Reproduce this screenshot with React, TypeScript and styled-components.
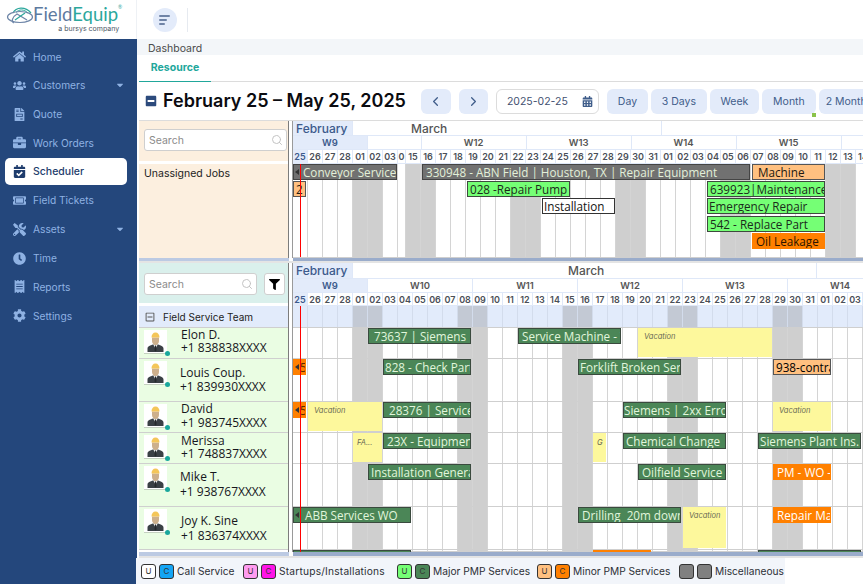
import type { FC, ReactNode } from "react"
import styled, { createGlobalStyle } from "styled-components"
import {
  FaBriefcase,
  FaCalendarAlt,
  FaCalendarCheck,
  FaCaretDown,
  FaClock,
  FaCog,
  FaFileInvoice,
  FaFilter,
  FaHome,
  FaMinusSquare,
  FaReceipt,
  FaRegMinusSquare,
  FaTicketAlt,
  FaTools,
  FaUsers,
} from "react-icons/fa"
import { FiChevronLeft, FiChevronRight, FiSearch } from "react-icons/fi"

const UI_FONT = `"Inter", "Roboto", "Liberation Sans", sans-serif`
const CARD_FONT = `"Open Sans", "Noto Sans", sans-serif`

const Global = createGlobalStyle`
  html, body {
    margin: 0;
    padding: 0;
    height: 100%;
    overflow: hidden;
    background: #fff;
    font-family: ${UI_FONT};
  }
  * { box-sizing: border-box; }
`

const Shell = styled.div`
  display: flex;
  width: 863px;
  height: 584px;
  overflow: hidden;
`

/* sidebar */
const Sidebar = styled.aside`
  flex: 0 0 137px;
  display: flex;
  flex-direction: column;
`
const LogoBox = styled.div`
  height: 39px;
  background: #fff;
  border-right: 1px solid #eef1f5;
  display: flex;
  align-items: flex-start;
  padding: 4px 0 0 6px;
`
const LogoText = styled.div`
  display: flex;
  flex-direction: column;
  align-items: flex-end;
  margin-left: -1px;
  line-height: 1;
`
const LogoName = styled.div`
  font-family: "Lato", sans-serif;
  font-size: 18.5px;
  color: #5d7a9f;
  margin-top: 1px;
  span { color: #2ba79c; }
  sup { font-size: 5px; color: #2ba79c; vertical-align: top; }
`
const LogoSub = styled.div`
  font-size: 7px;
  color: #4a5563;
  margin: 1px 3px 0 0;
`
const Nav = styled.nav`
  flex: 1;
  background: #24477c;
  padding: 4px 10px 0 5px;
  display: flex;
  flex-direction: column;
  gap: 1.8px;
`
const NavRow = styled.div<{ $active?: boolean }>`
  height: 27px;
  border-radius: 5px;
  display: flex;
  align-items: center;
  padding-left: 8px;
  font-size: ${(p) => (p.$active ? 10.5 : 10.2)}px;
  font-weight: ${(p) => (p.$active ? 500 : 400)};
  background: ${(p) => (p.$active ? "#fff" : "transparent")};
  color: ${(p) => (p.$active ? "#1e3c6c" : "#8fb2e3")};
  svg { flex: 0 0 13px; width: 13px; height: 13px; margin-right: 7px; }
`
const Caret = styled.span`
  margin-left: auto;
  display: flex;
  svg { flex: none; width: 10px; height: 10px; margin: 0 2px 0 0; }
`

/* top area */
const Main = styled.div`
  flex: 1;
  min-width: 0;
  display: flex;
  flex-direction: column;
`
const TopBar = styled.header`
  height: 39px;
  display: flex;
  align-items: center;
  padding-left: 16px;
  flex: none;
`
const MenuButton = styled.div`
  width: 24px;
  height: 24px;
  border-radius: 50%;
  background: #e3ebfa;
  display: flex;
  flex-direction: column;
  justify-content: center;
  gap: 2px;
  padding-left: 6px;
`
const MenuLine = styled.i<{ $w: number }>`
  display: block;
  height: 2px;
  border-radius: 1px;
  width: ${(p) => p.$w}px;
  background: #6f83a6;
`
const TopSep = styled.div`
  width: 1px;
  height: 24px;
  margin-left: 10px;
  background: #e6eaf0;
`
const Breadcrumb = styled.div`
  height: 16px;
  flex: none;
  background: #f3f6f9;
  font-size: 10.5px;
  line-height: 19px;
  color: #4a4a4a;
  padding-left: 11px;
`
const TabStrip = styled.div`
  height: 27px;
  flex: none;
  margin-left: 2px;
  border-bottom: 1px solid #dcdcdc;
  display: flex;
`
const Tab = styled.div`
  width: 72px;
  margin-bottom: -1px;
  border-bottom: 1px solid #21a79b;
  color: #21a79b;
  font-size: 10.5px;
  font-weight: 700;
  line-height: 25px;
  text-align: center;
`
const Toolbar = styled.div`
  height: 39px;
  flex: none;
  display: flex;
  align-items: center;
  padding: 0 0 0 6px;
  gap: 3px;
  position: relative;
  border-bottom: 1px solid #dcdcdc;
  margin-left: 2px;
`
const Collapse = styled.span`
  display: flex;
  color: #2c4a7c;
  margin-right: 3px;
  svg { width: 12px; height: 12px; }
`
const Title = styled.h1`
  margin: 0 12px 0 0;
  font-size: 18px;
  line-height: 1;
  font-weight: 600;
  color: #0b0b10;
  white-space: nowrap;
`
const SoftButton = styled.button<{ $w: number; $after?: number }>`
  flex: none;
  width: ${(p) => p.$w}px;
  height: 25px;
  margin-right: ${(p) => p.$after ?? 0}px;
  border: 0;
  border-radius: 6px;
  background: #e3ebfa;
  color: #3f5d8a;
  font: 400 10.5px ${UI_FONT};
  display: flex;
  align-items: center;
  justify-content: center;
  white-space: nowrap;
  padding: 0;
  svg { width: 15px; height: 15px; }
`
const DateBox = styled.div`
  flex: none;
  width: 103px;
  height: 25px;
  margin: 0 5px;
  border: 1px solid #dcdcdc;
  border-radius: 6px;
  display: flex;
  align-items: center;
  justify-content: space-between;
  padding: 0 5px 0 10px;
  color: #3f5070;
  font-size: 10.5px;
  svg { width: 11px; height: 11px; color: #3f5d8a; }
`
const Marker = styled.i`
  position: absolute;
  left: 673px;
  top: 31px;
  width: 4px;
  height: 4px;
  background: #8bc34a;
`

/* scheduler */
const Scheduler = styled.div`
  flex: 1;
  min-height: 0;
  display: flex;
  flex-direction: column;
  margin-left: 2px;
`
const Section = styled.section<{ $h: number }>`
  height: ${(p) => p.$h}px;
  flex: none;
  display: flex;
`
const LeftPanel = styled.div`
  flex: 0 0 150px;
  min-width: 0;
  display: flex;
  flex-direction: column;
  border-right: 1px solid #7c7c7c;
`
const SearchArea = styled.div<{ $bg: string; $top: number }>`
  height: 43px;
  flex: none;
  background: ${(p) => p.$bg};
  border-bottom: 3px solid #fff;
  display: flex;
  align-items: flex-start;
  padding: ${(p) => p.$top}px 0 0 5px;
  gap: 7px;
`
const SearchBox = styled.div<{ $w: number }>`
  width: ${(p) => p.$w}px;
  height: 22px;
  background: #fff;
  border: 1px solid #cfcfcf;
  border-radius: 3px;
  display: flex;
  align-items: center;
  justify-content: space-between;
  padding: 0 3px 0 4px;
  color: #8b8b8b;
  font-size: 10.5px;
  svg { width: 12px; height: 12px; color: #c4c4c4; }
`
const FilterButton = styled.div`
  width: 21px;
  height: 22px;
  background: #fff;
  border: 1px solid #cfcfcf;
  border-radius: 3px;
  display: flex;
  align-items: center;
  justify-content: center;
  svg { width: 11px; height: 11px; color: #000; }
`
const Unassigned = styled.div`
  flex: 1;
  background: #fcefdf;
  padding: 3px 5px;
  font-size: 10.5px;
  color: #222;
`
const TeamRow = styled.div`
  height: 22px;
  flex: none;
  background: #e2ebfb;
  border-bottom: 1px solid #cfcfcf;
  display: flex;
  align-items: center;
  padding-left: 6px;
  font-size: 10px;
  color: #222;
  svg { width: 10px; height: 10px; color: #555; margin-right: 8px; }
`
const ResourceRow = styled.div<{ $h: number }>`
  height: ${(p) => p.$h}px;
  flex: none;
  background: #eafde3;
  border-bottom: 1px solid #cfcfcf;
  display: flex;
  align-items: flex-start;
  padding-left: 5px;
  gap: 14px;
`
const AvatarWrap = styled.div`
  position: relative;
  flex: none;
  width: 23px;
  height: 24px;
  margin-top: 2px;
  background: #fff;
  border-bottom: 1px solid #c4d0c0;
`
const Dot = styled.i`
  position: absolute;
  right: -3px;
  bottom: -3px;
  width: 5px;
  height: 5px;
  border-radius: 50%;
  background: #19a79c;
`
const ResourceText = styled.div<{ $top: number; $gap: number; $shift?: number }>`
  display: flex;
  flex-direction: column;
  gap: ${(p) => p.$gap}px;
  margin-left: ${(p) => p.$shift ?? 0}px;
  padding-top: ${(p) => p.$top}px;
  font-family: ${CARD_FONT};
  font-size: 12px;
  line-height: 13px;
  color: #16161c;
  span { display: block; white-space: nowrap; }
`
const Gutter = styled.div`
  flex: 0 0 4px;
  background: #fff;
  border-right: 1px solid #9a9a9a;
`
const Timeline = styled.div`
  flex: 1;
  min-width: 0;
  overflow: hidden;
  display: flex;
  flex-direction: column;
  position: relative;
`
const HeadRow = styled.div<{ $h: number }>`
  height: ${(p) => p.$h}px;
  flex: none;
  display: flex;
  border-bottom: 1px solid #dfe8f8;
`
const MonthCell = styled.div<{ $w: number; $current?: boolean; $pad?: number }>`
  flex: 0 0 ${(p) => p.$w}px;
  font-size: 12px;
  font-weight: 500;
  line-height: 15px;
  padding-left: ${(p) => p.$pad ?? 3}px;
  white-space: nowrap;
  background: ${(p) => (p.$current ? "#e3ebfa" : "#fff")};
  color: ${(p) => (p.$current ? "#3c5a8c" : "#555")};
  border-right: 1px solid #dfe8f8;
`
const WeekCell = styled.div<{ $w: number; $current?: boolean }>`
  flex: 0 0 ${(p) => p.$w}px;
  font-size: 9.5px;
  font-weight: 600;
  line-height: 13px;
  text-align: center;
  background: ${(p) => (p.$current ? "#e3ebfa" : "#fff")};
  color: ${(p) => (p.$current ? "#3c5a8c" : "#555")};
  border-right: 1px solid #dfe8f8;
`
const DayCell = styled.div<{ $w: number; $current?: boolean }>`
  flex: 0 0 ${(p) => p.$w}px;
  overflow: hidden;
  font-size: 9px;
  font-weight: 600;
  line-height: 13px;
  text-align: center;
  background: ${(p) => (p.$current ? "#e3ebfa" : "#fff")};
  color: ${(p) => (p.$current ? "#3c5a8c" : "#4a4f58")};
  border-right: 1px solid #dfe8f8;
`
const GridRow = styled.div<{ $h: number; $team?: boolean }>`
  height: ${(p) => p.$h}px;
  flex: none;
  display: flex;
  position: relative;
  border-bottom: 1px solid #cfcfcf;
  background: ${(p) => (p.$team ? "#e2ebfb" : "#fff")};
`
const GridCell = styled.div<{ $w: number; $off: boolean; $team?: boolean }>`
  flex: 0 0 ${(p) => p.$w}px;
  border-right: 1px solid ${(p) => (p.$team ? "#d3dcec" : "#d4d4d4")};
  background: ${(p) => (p.$off ? (p.$team ? "#c3c9d4" : "#cfcfcf") : "transparent")};
`
const TodayLine = styled.i<{ $top: number }>`
  position: absolute;
  left: 7px;
  top: ${(p) => p.$top}px;
  bottom: 0;
  width: 1px;
  background: #f00;
  z-index: 3;
`

type Kind = "grey" | "major" | "majorDone" | "minor" | "minorDone" | "call"
const KIND: Record<Kind, { bg: string; fg: string; border: string }> = {
  grey: { bg: "#717171", fg: "#e3f0d9", border: "#444" },
  major: { bg: "#75ff75", fg: "#1b2b1b", border: "#3e4a3e" },
  majorDone: { bg: "#4b8657", fg: "#e1f6dc", border: "#3a4a3e" },
  minor: { bg: "#ffc080", fg: "#241a10", border: "#555" },
  minorDone: { bg: "#ff8000", fg: "#fff", border: "#ff8000" },
  call: { bg: "#fff", fg: "#111", border: "#333" },
}
const Card = styled.div<{ $x: number; $w: number; $y: number; $kind: Kind; $pad: number; $fg?: string; $edge?: boolean }>`
  position: absolute;
  left: ${(p) => p.$x - 293}px;
  top: ${(p) => p.$y}px;
  width: ${(p) => p.$w}px;
  height: 16px;
  z-index: 2;
  background: ${(p) => KIND[p.$kind].bg};
  color: ${(p) => p.$fg ?? KIND[p.$kind].fg};
  border: 1px solid ${(p) => KIND[p.$kind].border};
  font-family: ${CARD_FONT};
  font-size: 11.7px;
  line-height: 14px;
  white-space: pre;
  overflow: hidden;
  padding-left: ${(p) => p.$pad}px;
  ${(p) =>
    p.$edge
      ? `&::before {
    content: "";
    position: absolute;
    left: 1px;
    top: 4px;
    border: 3px solid transparent;
    border-right: 4px solid #333;
    border-left: 0;
  }`
      : ""}
`
const Vacation = styled.div<{ $x: number; $w: number; $h: number; $y: number; $small?: boolean }>`
  position: absolute;
  left: ${(p) => p.$x - 293}px;
  top: ${(p) => p.$y}px;
  width: ${(p) => p.$w}px;
  height: ${(p) => p.$h}px;
  z-index: 2;
  background: #fdf89c;
  color: #6b6b55;
  font-size: 7.5px;
  font-style: italic;
  line-height: 10px;
  padding: ${(p) => (p.$small ? "5px 0 0 4px" : "4px 0 0 6px")};
  overflow: hidden;
  white-space: nowrap;
`

const Splitter = styled.div<{ $h: number }>`
  height: ${(p) => p.$h}px;
  flex: none;
  display: flex;
  border-bottom: 2px solid #e4e4e4;
`
const SplitLeft = styled.div`
  flex: 0 0 150px;
  background: #bccae3;
`
const SplitRight = styled.div`
  flex: 1;
  margin-left: 4px;
  background: #9aaccb;
`
const Legend = styled.footer`
  flex: none;
  height: 26px;
  width: 649px;
  margin-left: -3px;
  background: #f2f5fa;
  display: flex;
  align-items: center;
  padding-left: 5px;
`
const LegendGroup = styled.div<{ $w: number; $track?: number }>`
  flex: 0 0 ${(p) => p.$w}px;
  display: flex;
  align-items: center;
  font-size: 10.2px;
  letter-spacing: ${(p) => p.$track ?? 0}px;
  color: #2c2f36;
  white-space: nowrap;
`
const Chip = styled.span<{ $bg: string }>`
  width: 15px;
  height: 15px;
  margin-right: 3px;
  border: 1px solid #333;
  border-radius: 3px;
  background: ${(p) => p.$bg};
  font-size: 8px;
  letter-spacing: 0;
  line-height: 13px;
  text-align: center;
  color: #333;
`

const Logo: FC = () => (
  <svg width="28" height="24" viewBox="0 0 28 24" fill="none">
    <path d="M7 9C10 3 19 2 25 9" stroke="#2ba79c" strokeWidth="1.3" />
    <path d="M10 8.500C13 5 18 5 22 9" stroke="#2ba79c" strokeWidth="1" />
    <ellipse cx="14" cy="13" rx="12.500" ry="5.500" stroke="#6e86a8" strokeWidth="1.2" />
    <path d="M8 19C5 18 6 13 11 10L21 16" stroke="#6e86a8" strokeWidth="1.2" />
    <path d="M9 16L19 9" stroke="#2ba79c" strokeWidth="1.2" />
  </svg>
)

const Avatar: FC = () => (
  <AvatarWrap>
    <svg width="23" height="23" viewBox="0 0 23 23">
      <path d="M3.500 22V18.500C3.500 16 6.500 15.500 9 14.500H14C16.500 15.500 19.500 16 19.500 18.500V22Z" fill="#3a4045" />
      <path d="M9.300 14.500L11.500 18.500L13.700 14.500Z" fill="#f1f1f1" />
      <path d="M11 15.500H12L12.500 20.500L11.500 21.500L10.500 20.500Z" fill="#26292c" />
      <path d="M8 7.500H15V11C15 13 13.500 15 11.500 15C9.500 15 8 13 8 11Z" fill="#cdb08c" />
      <path d="M7.500 7.500C7.500 4.500 9 2.500 11.500 2.500C14 2.500 15.500 4.500 15.500 7.500Z" fill="#f4c659" />
    </svg>
    <Dot />
  </AvatarWrap>
)

const SearchField: FC<{ width: number }> = ({ width }) => (
  <SearchBox $w={width}>
    Search
    <FiSearch />
  </SearchBox>
)

const Resource: FC<{ name: string; phone: string; height: number; top: number; gap: number; shift?: number }> = ({
  name,
  phone,
  height,
  top,
  gap,
  shift,
}) => (
  <ResourceRow $h={height}>
    <Avatar />
    <ResourceText $top={top} $gap={gap} $shift={shift}>
      <span>{name}</span>
      <span>{phone}</span>
    </ResourceText>
  </ResourceRow>
)

const pad = (n: number) => String(n).padStart(2, "0")
const dayLabel = (i: number) => pad(i < 4 ? 25 + i : i < 35 ? i - 3 : i - 34)
const isOff = (i: number) => i % 7 === 4 || i % 7 === 5

type Col = { label: string; w: number; off: boolean }
const range = (from: number, to: number): Col[] => {
  const out: Col[] = []
  for (let i = from; i < to; i++) out.push({ label: dayLabel(i), w: 15, off: isOff(i) })
  return out
}
const upperCols: Col[] = [...range(0, 7), { label: "0", w: 8, off: false }, ...range(18, 50)]
const lowerCols: Col[] = range(0, 40)

const DayHeader: FC<{ cols: Col[]; h: number }> = ({ cols, h }) => (
  <HeadRow $h={h}>
    {cols.map((c, i) => (
      <DayCell key={i} $w={c.w} $current={i === 0}>
        {c.label}
      </DayCell>
    ))}
  </HeadRow>
)

const Cells: FC<{ cols: Col[]; team?: boolean }> = ({ cols, team }) => (
  <>
    {cols.map((c, i) => (
      <GridCell key={i} $w={c.w} $off={c.off} $team={team} />
    ))}
  </>
)

const Row: FC<{ h: number; children?: ReactNode }> = ({ h, children }) => (
  <GridRow $h={h}>
    <Cells cols={lowerCols} />
    {children}
  </GridRow>
)

const nav = [
  { label: "Home", icon: <FaHome /> },
  { label: "Customers", icon: <FaUsers />, caret: true },
  { label: "Quote", icon: <FaFileInvoice /> },
  { label: "Work Orders", icon: <FaBriefcase /> },
  { label: "Scheduler", icon: <FaCalendarCheck />, active: true },
  { label: "Field Tickets", icon: <FaTicketAlt /> },
  { label: "Assets", icon: <FaTools />, caret: true },
  { label: "Time", icon: <FaClock /> },
  { label: "Reports", icon: <FaReceipt /> },
  { label: "Settings", icon: <FaCog /> },
]

const legend = [
  { label: "Call Service", u: "#fff", c: "#14a5f5", w: 102 },
  { label: "Startups/Installations", u: "#ff9bf0", c: "#ff14e8", w: 154, track: 0.2 },
  { label: "Major PMP Services", u: "#75ff75", c: "#4b8657", w: 140 },
  { label: "Minor PMP Services", u: "#ffc080", c: "#ff8000", w: 142 },
  { label: "Miscellaneous", u: "#808080", c: "#808080", w: 104, blank: true },
]

export default function App() {
  return (
    <Shell>
      <Global />
      <Sidebar>
        <LogoBox>
          <Logo />
          <LogoText>
            <LogoName>
              Field<span>Equip</span>
              <sup>®</sup>
            </LogoName>
            <LogoSub>a bursys company</LogoSub>
          </LogoText>
        </LogoBox>
        <Nav>
          {nav.map((n) => (
            <NavRow key={n.label} $active={n.active}>
              {n.icon}
              {n.label}
              {n.caret && (
                <Caret>
                  <FaCaretDown />
                </Caret>
              )}
            </NavRow>
          ))}
        </Nav>
      </Sidebar>
      <Main>
        <TopBar>
          <MenuButton>
            <MenuLine $w={11} />
            <MenuLine $w={8} />
            <MenuLine $w={6} />
          </MenuButton>
          <TopSep />
        </TopBar>
        <Breadcrumb>Dashboard</Breadcrumb>
        <TabStrip>
          <Tab>Resource</Tab>
        </TabStrip>
        <Toolbar>
          <Collapse>
            <FaMinusSquare />
          </Collapse>
          <Title>February 25 – May 25, 2025</Title>
          <SoftButton $w={30} $after={5}>
            <FiChevronLeft />
          </SoftButton>
          <SoftButton $w={29}>
            <FiChevronRight />
          </SoftButton>
          <DateBox>
            2025-02-25
            <FaCalendarAlt />
          </DateBox>
          <SoftButton $w={41}>Day</SoftButton>
          <SoftButton $w={56}>3 Days</SoftButton>
          <SoftButton $w={49}>Week</SoftButton>
          <SoftButton $w={54}>Month</SoftButton>
          <SoftButton $w={60}>2 Months</SoftButton>
          <Marker />
        </Toolbar>
        <Scheduler>
          <Section $h={137}>
            <LeftPanel>
              <SearchArea $bg="#fcefdf" $top={8}>
                <SearchField width={143} />
              </SearchArea>
              <Unassigned>Unassigned Jobs</Unassigned>
            </LeftPanel>
            <Gutter />
            <Timeline>
              <HeadRow $h={15}>
                <MonthCell $w={60} $current>
                  February
                </MonthCell>
                <MonthCell $w={309} $pad={58}>
                  March
                </MonthCell>
              </HeadRow>
              <HeadRow $h={14}>
                <WeekCell $w={75} $current>
                  W9
                </WeekCell>
                <WeekCell $w={53.6} />
                <WeekCell $w={105}>W12</WeekCell>
                <WeekCell $w={105}>W13</WeekCell>
                <WeekCell $w={105}>W14</WeekCell>
                <WeekCell $w={105}>W15</WeekCell>
                <WeekCell $w={105} />
              </HeadRow>
              <DayHeader cols={upperCols} h={14} />
              <GridRow $h={94}>
                <Cells cols={upperCols} />
                <TodayLine $top={0} />
                <Card $x={293} $w={104} $y={0} $kind="grey" $pad={9} $edge>
                  Conveyor Service
                </Card>
                <Card $x={422} $w={328} $y={0} $kind="grey" $pad={3}>
                  330948 - ABN Field | Houston, TX | Repair Equipment
                </Card>
                <Card $x={752} $w={73} $y={0} $kind="minor" $pad={5}>
                  Machine
                </Card>
                <Card $x={293} $w={13} $y={17} $kind="minor" $pad={2}>
                  2
                </Card>
                <Card $x={467} $w={103} $y={17} $kind="major" $pad={2}>
                  028 -Repair Pump
                </Card>
                <Card $x={542} $w={73} $y={34} $kind="call" $pad={1}>
                  Installation
                </Card>
                <Card $x={707} $w={118} $y={17} $kind="major" $pad={2}>
                  639923|Maintenance
                </Card>
                <Card $x={707} $w={118} $y={34} $kind="major" $pad={1}>
                  Emergency Repair
                </Card>
                <Card $x={707} $w={118} $y={52} $kind="major" $pad={2}>
                  542 - Replace Part
                </Card>
                <Card $x={752} $w={73} $y={69} $kind="minorDone" $pad={3} $fg="#2b1500">
                  Oil Leakage
                </Card>
              </GridRow>
            </Timeline>
          </Section>
          <Splitter $h={5}>
            <SplitLeft />
            <SplitRight />
          </Splitter>
          <Section $h={289}>
            <LeftPanel>
              <SearchArea $bg="#daf0ec" $top={10}>
                <SearchField width={113} />
                <FilterButton>
                  <FaFilter />
                </FilterButton>
              </SearchArea>
              <TeamRow>
                <FaRegMinusSquare />
                Field Service Team
              </TeamRow>
              <Resource name="Elon D." phone="+1 838838XXXX" height={31} top={0} gap={0} />
              <Resource name="Louis Coup." phone="+1 839930XXXX" height={43} top={7} gap={1} shift={-1} />
              <Resource name="David" phone="+1 983745XXXX" height={31} top={0} gap={1} />
              <Resource name="Merissa" phone="+1 748837XXXX" height={31} top={1} gap={0} />
              <Resource name="Mike T." phone="+1 938767XXXX" height={43} top={6} gap={2} shift={-1} />
              <Resource name="Joy K. Sine" phone="+1 836374XXXX" height={43} top={7} gap={2} />
            </LeftPanel>
            <Gutter />
            <Timeline>
              <HeadRow $h={16}>
                <MonthCell $w={60} $current>
                  February
                </MonthCell>
                <MonthCell $w={464} $pad={215}>
                  March
                </MonthCell>
              </HeadRow>
              <HeadRow $h={14}>
                <WeekCell $w={75} $current>
                  W9
                </WeekCell>
                <WeekCell $w={105}>W10</WeekCell>
                <WeekCell $w={105}>W11</WeekCell>
                <WeekCell $w={105}>W12</WeekCell>
                <WeekCell $w={105}>W13</WeekCell>
                <WeekCell $w={105}>W14</WeekCell>
              </HeadRow>
              <DayHeader cols={lowerCols} h={13} />
              <GridRow $h={22} $team>
                <Cells cols={lowerCols} team />
              </GridRow>
              <TodayLine $top={43} />
              <Row h={31}>
                <Card $x={368} $w={103} $y={0} $kind="majorDone" $pad={5}>
                  73637 | Siemens
                </Card>
                <Card $x={518} $w={103} $y={0} $kind="majorDone" $pad={3}>
                  Service Machine - WO
                </Card>
                <Vacation $x={638} $w={134} $h={29} $y={0}>
                  Vacation
                </Vacation>
              </Row>
              <Row h={43}>
                <Card $x={293} $w={13} $y={0} $kind="minorDone" $pad={6} $fg="#5a2c00" $edge>
                  5
                </Card>
                <Card $x={383} $w={88} $y={0} $kind="majorDone" $pad={1}>
                  828 - Check Part
                </Card>
                <Card $x={578} $w={103} $y={0} $kind="majorDone" $pad={1}>
                  Forklift Broken Service
                </Card>
                <Card $x={773} $w={58} $y={0} $kind="minor" $pad={2} $fg="#000">
                  938-contract
                </Card>
              </Row>
              <Row h={31}>
                <Card $x={293} $w={13} $y={0} $kind="minorDone" $pad={6} $fg="#5a2c00" $edge>
                  5
                </Card>
                <Vacation $x={308} $w={74} $h={29} $y={0}>
                  Vacation
                </Vacation>
                <Card $x={383} $w={88} $y={0} $kind="majorDone" $pad={5}>
                  28376 | Service
                </Card>
                <Card $x={623} $w={103} $y={0} $kind="majorDone" $pad={0}>
                  Siemens | 2xx Error
                </Card>
                <Vacation $x={773} $w={58} $h={29} $y={0}>
                  Vacation
                </Vacation>
              </Row>
              <Row h={31}>
                <Vacation $x={353} $w={29} $h={29} $y={0} $small>
                  FA...
                </Vacation>
                <Card $x={383} $w={88} $y={0} $kind="majorDone" $pad={3}>
                  23X - Equipment
                </Card>
                <Vacation $x={593} $w={13} $h={29} $y={0} $small>
                  G
                </Vacation>
                <Card $x={623} $w={103} $y={0} $kind="majorDone" $pad={2}>
                  Chemical Change
                </Card>
                <Card $x={758} $w={103} $y={0} $kind="majorDone" $pad={1}>
                  Siemens Plant Ins.
                </Card>
              </Row>
              <Row h={43}>
                <Card $x={368} $w={103} $y={0} $kind="majorDone" $pad={2}>
                  Installation General
                </Card>
                <Card $x={638} $w={88} $y={0} $kind="majorDone" $pad={3}>
                  Oilfield Service
                </Card>
                <Card $x={773} $w={58} $y={0} $kind="minorDone" $pad={3}>
                  PM - WO - 1
                </Card>
              </Row>
              <Row h={43}>
                <Card $x={293} $w={118} $y={0} $kind="majorDone" $pad={11} $edge>
                  ABB Services WO
                </Card>
                <Card $x={578} $w={103} $y={0} $kind="majorDone" $pad={3}>
                  Drilling  20m down
                </Card>
                <Vacation $x={683} $w={43} $h={41} $y={0}>
                  Vacation
                </Vacation>
                <Card $x={773} $w={58} $y={0} $kind="minorDone" $pad={3}>
                  Repair Machine
                </Card>
              </Row>
              <Row h={2}>
                <Card $x={293} $w={118} $y={0} $kind="majorDone" $pad={3} />
                <Card $x={593} $w={58} $y={0} $kind="minorDone" $pad={3} />
                <Card $x={758} $w={103} $y={0} $kind="majorDone" $pad={3} />
              </Row>
            </Timeline>
          </Section>
          <Splitter $h={6}>
            <SplitLeft />
            <SplitRight />
          </Splitter>
          <Legend>
            {legend.map((l) => (
              <LegendGroup key={l.label} $w={l.w} $track={l.track}>
                <Chip $bg={l.u}>{l.blank ? "" : "U"}</Chip>
                <Chip $bg={l.c}>{l.blank ? "" : "C"}</Chip>
                {l.label}
              </LegendGroup>
            ))}
          </Legend>
        </Scheduler>
      </Main>
    </Shell>
  )
}
